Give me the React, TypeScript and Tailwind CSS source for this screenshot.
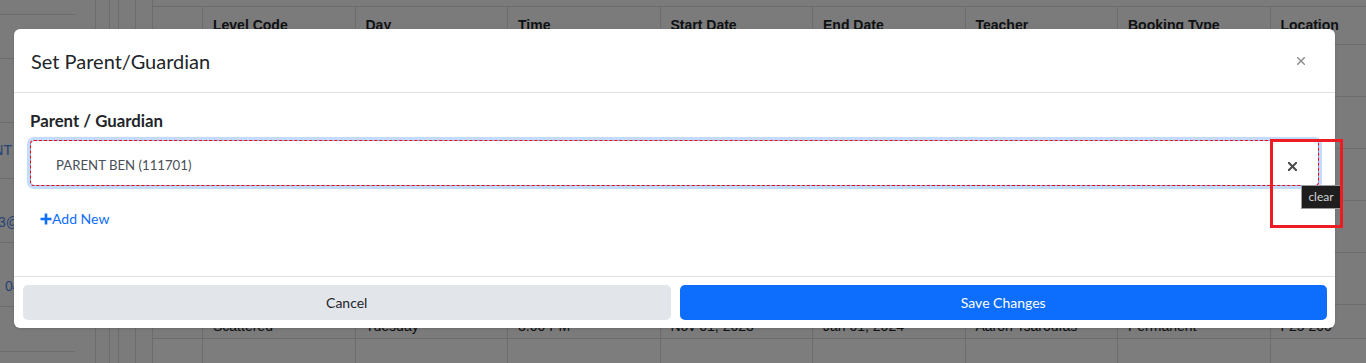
import React from 'react';

const headers = ['Level Code', 'Day', 'Time', 'Start Date', 'End Date', 'Teacher', 'Booking Type', 'Location'];
const lastRow = ['Scattered', 'Tuesday', '3:00 PM', 'Nov 01, 2023', 'Jan 01, 2024', 'Aaron Tsaroufas', 'Permanent', 'F25 200'];

const CloseIcon: React.FC<{ className?: string; strokeWidth?: number }> = ({ className, strokeWidth = 1.4 }) => (
  <svg viewBox="0 0 8 8" className={className} fill="none" stroke="currentColor" strokeWidth={strokeWidth} strokeLinecap="square">
    <path d="M0.7 0.7 L7.3 7.3 M7.3 0.7 L0.7 7.3" />
  </svg>
);

const PlusIcon = () => (
  <svg viewBox="0 0 12 12" className="h-[12px] w-[12px]" fill="none" stroke="currentColor" strokeWidth={2.6}>
    <path d="M6 0.5 V11.5 M0.5 6 H11.5" />
  </svg>
);

const Background = () => (
  <div className="flex h-full font-['Liberation_Sans',Arial,sans-serif] text-[14px] text-[#212529]">
    {/* contacts list on the left, scrolled */}
    <div className="flex w-[75px] shrink-0 flex-col">
      <div className="h-[15px] border-b border-[#d6d8da]" />
      <div className="h-[44px] border-b border-[#d6d8da]" />
      <div className="h-[64px] border-b border-[#d6d8da]" />
      <div className="flex h-[56px] items-center border-b border-[#d6d8da]">
        <div className="flex w-[12px] justify-end whitespace-nowrap text-[#4a86e8]">PARENT</div>
      </div>
      <div className="flex h-[64px] items-center border-b border-[#d6d8da] pt-[24px]">
        <div className="flex w-[20px] justify-end whitespace-nowrap text-[#4a86e8]">ben3@</div>
      </div>
      <div className="flex h-[64px] items-center border-b border-[#d6d8da] pt-[24px]">
        <span className="pl-[5px] whitespace-nowrap text-[#4a86e8]">0412 345 678</span>
      </div>
      <div className="h-[45px] border-b border-[#d6d8da]" />
    </div>
    <div className="w-[20px] shrink-0" />
    <div className="w-[14px] shrink-0 border-l border-[#d6d8da]" />
    <div className="w-[9px] shrink-0 border-l border-[#d6d8da]" />
    <div className="w-[17px] shrink-0 border-l border-[#d6d8da]" />
    <div className="w-[17px] shrink-0 border-l border-[#d6d8da]" />
    <div className="min-w-0 flex-1 border-l border-[#d6d8da]">
      <div className="h-[6px]" />
      <div className="flex h-[39px] border-y border-[#d6d8da] font-bold">
        <div className="w-[49px] shrink-0" />
        {headers.map((h) => (
          <div key={h} className="flex w-[152.5px] shrink-0 items-center border-l border-[#d6d8da] pl-[10px] pb-[1px]">
            {h}
          </div>
        ))}
      </div>
      {[0, 1, 2, 3, 4].map((i) => (
        <div key={i} className="flex h-[52px] border-b border-[#d6d8da]">
          <div className="w-[49px] shrink-0" />
          {headers.map((h) => (
            <div key={h} className="w-[152.5px] shrink-0 border-l border-[#d6d8da]" />
          ))}
        </div>
      ))}
      <div className="flex h-[34px] border-b border-[#d6d8da]">
        <div className="w-[49px] shrink-0" />
        {lastRow.map((c, i) => (
          <div key={i} className="flex w-[152.5px] shrink-0 items-end border-l border-[#d6d8da] pl-[10px] pb-[1px] whitespace-nowrap">
            {c}
          </div>
        ))}
      </div>
      <div className="flex h-[40px] bg-[#fbfbfb]">
        <div className="w-[49px] shrink-0" />
        {headers.map((h) => (
          <div key={h} className="w-[152.5px] shrink-0 border-l border-[#d6d8da]" />
        ))}
      </div>
    </div>
  </div>
);

export default function App() {
  return (
    <div className="relative h-[363px] w-[1366px] overflow-hidden bg-[#f6f6f6]">
      <Background />
      <div className="absolute inset-0 bg-black/50" />

      {/* modal */}
      <div className="absolute left-[14px] top-[29px] w-[1321px] rounded-[6px] bg-white font-['Lato',sans-serif] text-[#212529] shadow-sm">
        <div className="flex h-[64px] items-center justify-between border-b border-[#dee2e6] pl-[17px] pr-[30px]">
          <h5 className="text-[20px] leading-[30px] font-normal">Set Parent/Guardian</h5>
          <CloseIcon className="h-[8px] w-[8px] text-[#8a8a8a]" />
        </div>

        <div className="px-[16px] pt-[16px] pb-[47px]">
          <label className="block text-[16.8px] font-bold leading-[24px]">Parent / Guardian</label>
          <div className="relative mt-[7px]">
            <div className="flex h-[46px] items-center justify-between rounded-[4px] border border-[#86b7fe] pt-[6px] pl-[25px] pr-[21px] shadow-[0_0_0_3px_rgba(13,110,253,0.25)] outline outline-1 outline-dashed outline-[#ff0000] -outline-offset-1">
              <span className="text-[13.2px] text-[#495057]">PARENT BEN (111701)</span>
              <CloseIcon className="h-[9px] w-[9px] text-[#4a4a4a]" strokeWidth={1.8} />
            </div>
          </div>
          <button className="mt-[22px] ml-[10px] flex items-center text-[14px] leading-[21px] text-[#0d6efd]">
            <PlusIcon />
            <span>Add New</span>
          </button>
        </div>

        <div className="flex gap-[9px] border-t border-[#dee2e6] pt-[8px] pb-[8px] pl-[9px] pr-[8px]">
          <button className="h-[35px] flex-1 rounded-[5px] bg-[#e2e6ea] text-[14px] text-[#212529]">Cancel</button>
          <button className="h-[35px] flex-1 rounded-[5px] bg-[#0d6efd] text-[14px] text-white">Save Changes</button>
        </div>
      </div>

      {/* native tooltip */}
      <div className="absolute left-[1301px] top-[185px] flex h-[24px] w-[40px] items-center justify-center border border-[#9a9a9a] bg-[#1e1e1e] font-['Lato',sans-serif] text-[12px] text-[#d4d4d4]">
        clear
      </div>

      {/* annotation box */}
      <div className="absolute left-[1270px] top-[139px] h-[89px] w-[73px] border-[3px] border-[#ed1c24]" />
    </div>
  );
}
